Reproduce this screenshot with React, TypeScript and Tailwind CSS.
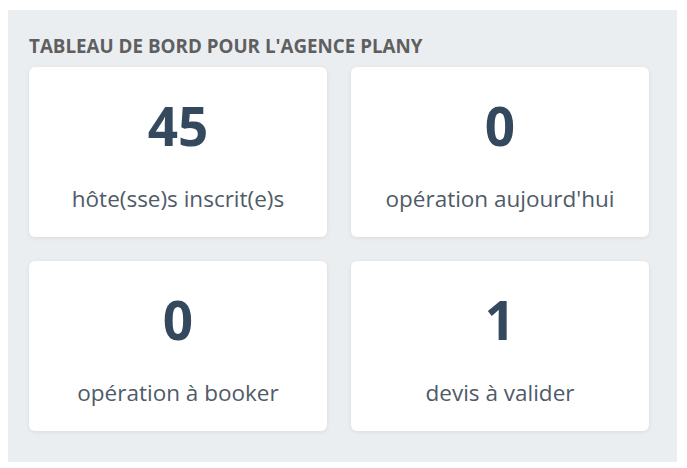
const stats = [
  { value: '45', label: 'hôte(sse)s inscrit(e)s' },
  { value: '0', label: "opération aujourd'hui" },
  { value: '0', label: 'opération à booker' },
  { value: '1', label: 'devis à valider' },
]

function StatCard({ value, label }: { value: string; label: string }) {
  return (
    <div className="flex h-[170px] flex-col items-center rounded-md bg-white pt-[27px] shadow-[0_1px_4px_rgba(0,0,0,0.08)]">
      <span className="text-[53px] font-bold leading-[64px] text-[#34495e]">{value}</span>
      <span className="mt-[26px] text-[22.5px] leading-[30px] text-[#4f5b67]">{label}</span>
    </div>
  )
}

export default function App() {
  return (
    <div className="h-[468px] w-[687px] bg-white pl-2 pt-[10px] font-['Open_Sans',sans-serif]">
      <div className="h-[452px] w-[669px] bg-[#ebeef1] pl-[21px] pr-[28px] pt-[24px]">
        <h2 className="mb-[9px] text-[18.8px] font-bold uppercase leading-[24px] text-[#5f5f5f]">
          Tableau de bord pour l'agence Plany
        </h2>
        <div className="grid grid-cols-2 gap-6">
          {stats.map((s, i) => (
            <StatCard key={i} value={s.value} label={s.label} />
          ))}
        </div>
      </div>
    </div>
  )
}
